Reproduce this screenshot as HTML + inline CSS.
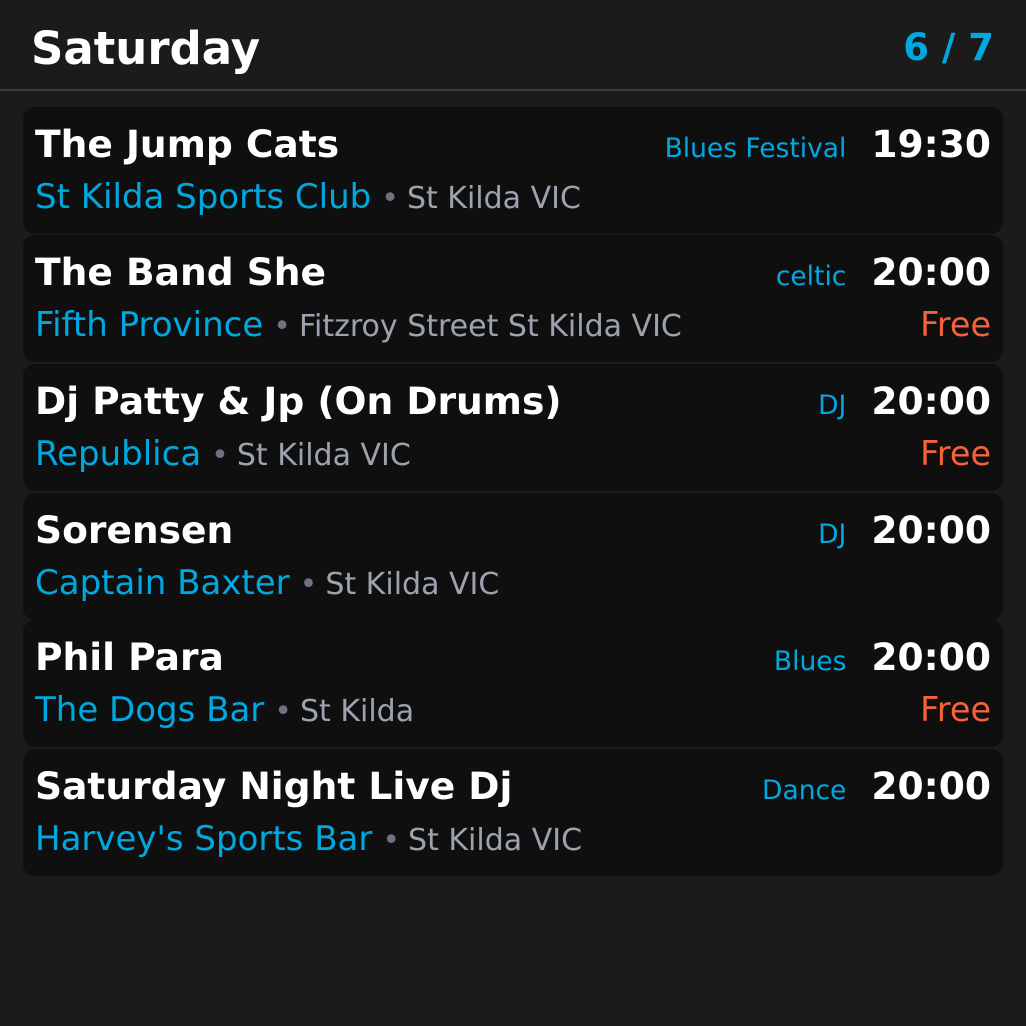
<!DOCTYPE html>
<html><head><meta charset="utf-8"><style>
*{margin:0;padding:0;box-sizing:border-box}
html,body{width:1026px;height:1026px;background:#1b1b1b;overflow:hidden;font-family:"DejaVu Sans","Liberation Sans",sans-serif}
.page{position:absolute;left:0;top:0;width:1026px;height:1026px;background:#1b1b1b;border-radius:0 0 40px 40px}
.h{position:absolute;left:31px;top:26px;font-size:45px;font-weight:bold;color:#fff;line-height:1}
.pg{position:absolute;right:32px;top:29px;font-size:37px;font-weight:bold;color:#00a8e0;line-height:1}
.line{position:absolute;left:0;top:89px;width:1026px;height:2px;background:#383d47}
.card{position:absolute;left:23px;width:980px;height:127px;background:#0f0f0f;border-radius:12px}
.r1{position:absolute;left:12px;right:12px;top:19px;display:flex;align-items:baseline;line-height:1}
.r2{position:absolute;left:12px;right:12px;top:73px;display:flex;align-items:baseline;line-height:1}
.n{font-size:37.6px;font-weight:bold;color:#fff;flex:1;white-space:nowrap}
.g{font-size:26.5px;color:#00a8e0;margin-right:25px}
.t{font-size:37.6px;font-weight:bold;color:#fff}
.v{font-size:34px;color:#00a8e0}
.d{font-size:30px;color:#6b7280;margin:0 8px 0 10px}
.l{font-size:30px;color:#9ca3af;flex:1}
.f{font-size:33.4px;color:#f4623a}
</style></head><body><div class="page">
<div class="h">Saturday</div><div class="pg">6 / 7</div><div class="line"></div>

<div class="card" style="top:107px"><div class="r1"><span class="n">The Jump Cats</span><span class="g">Blues Festival</span><span class="t">19:30</span></div><div class="r2"><span class="v">St Kilda Sports Club</span><span class="d">•</span><span class="l">St Kilda VIC</span></div></div>

<div class="card" style="top:235px"><div class="r1"><span class="n">The Band She</span><span class="g">celtic</span><span class="t">20:00</span></div><div class="r2"><span class="v">Fifth Province</span><span class="d">•</span><span class="l">Fitzroy Street St Kilda VIC</span><span class="f">Free</span></div></div>

<div class="card" style="top:364px"><div class="r1"><span class="n">Dj Patty &amp; Jp (On Drums)</span><span class="g">DJ</span><span class="t">20:00</span></div><div class="r2"><span class="v">Republica</span><span class="d">•</span><span class="l">St Kilda VIC</span><span class="f">Free</span></div></div>

<div class="card" style="top:493px"><div class="r1"><span class="n">Sorensen</span><span class="g">DJ</span><span class="t">20:00</span></div><div class="r2"><span class="v">Captain Baxter</span><span class="d">•</span><span class="l">St Kilda VIC</span></div></div>

<div class="card" style="top:620px"><div class="r1"><span class="n">Phil Para</span><span class="g">Blues</span><span class="t">20:00</span></div><div class="r2"><span class="v">The Dogs Bar</span><span class="d">•</span><span class="l">St Kilda</span><span class="f">Free</span></div></div>

<div class="card" style="top:749px"><div class="r1"><span class="n">Saturday Night Live Dj</span><span class="g">Dance</span><span class="t">20:00</span></div><div class="r2"><span class="v">Harvey's Sports Bar</span><span class="d">•</span><span class="l">St Kilda VIC</span></div></div>
</div></body></html>
